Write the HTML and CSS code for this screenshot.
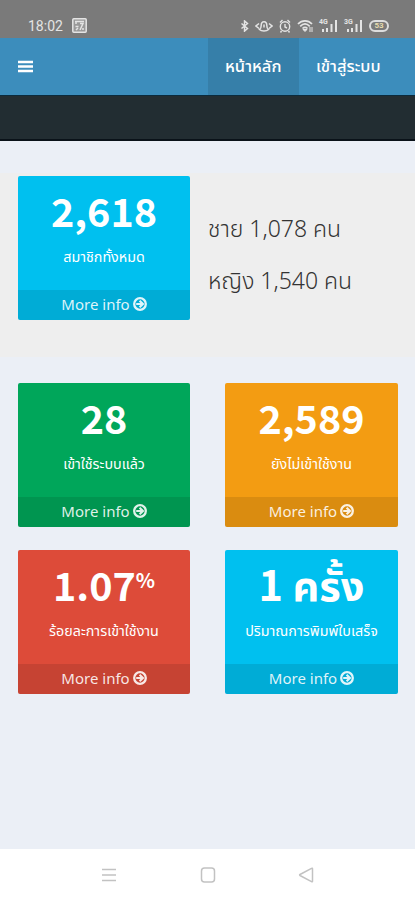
FILE: index.html
```
<!DOCTYPE html>
<html lang="th">
<head>
    <meta charset="UTF-8">
    <meta name="viewport" content="width=device-width, initial-scale=1">
    <title>หน้าหลัก</title>
    <link rel="stylesheet" href="styles.css">
</head>
<body>
    <svg class="defs" width="0" height="0">
        <symbol id="arrow" viewBox="0 0 14 14">
            <circle cx="7" cy="7" r="5.800" fill="none" stroke="currentColor" stroke-width="2.300"/>
            <path d="M3.200 7h6.400M6.600 3.700L9.900 7l-3.300 3.300" fill="none" stroke="currentColor" stroke-width="2.200"/>
        </symbol>
        <symbol id="signal" viewBox="0 0 19 14">
            <path d="M4 13v-3M8 13V9M12.500 13V5M17 13V1" stroke="currentColor" stroke-width="2"/>
        </symbol>
    </svg>

    <div class="status">
        <span class="time">18:02</span>
        <svg class="app-icon" width="15" height="15" viewBox="0 0 15 15">
            <rect x=".8" y=".8" width="13.400" height="13.400" rx="1" fill="#999" stroke="currentColor" stroke-width="1.500"/>
            <path d="M3 3.500h9M4 6V4M8 5.500h3L8 12M3.500 8.500h3M4 12l2-2M10 11h2" stroke="currentColor" stroke-width="1.500" fill="none"/>
        </svg>
        <div class="status-icons">
            <svg width="9" height="12" viewBox="0 0 9 14"><path d="M1 4l7 6-3.500 3V1L8 4 1 10" fill="none" stroke="currentColor" stroke-width="1.700"/></svg>
            <svg width="18" height="14" viewBox="0 0 18 14"><path d="M4 4.500L1 7l3 2.500M14 4.500L17 7l-3 2.500M4.500 10.500c2 2 7 2 9 0-1.300-.8-1.700-2-1.700-4C11.800 1.500 6.200 1.500 6.200 6.500c0 2-.4 3.200-1.700 4zM9 5.500v3" fill="none" stroke="currentColor" stroke-width="1.500"/></svg>
            <svg width="12" height="14" viewBox="0 0 12 14"><path d="M1 3.500L3.500 1M11 3.500L8.500 1M6 5v3l2 1M2.500 12l-1 1.500M9.500 12l1 1.500" fill="none" stroke="currentColor" stroke-width="1.400"/><circle cx="6" cy="7.500" r="4.700" fill="none" stroke="currentColor" stroke-width="1.400"/></svg>
            <svg width="16" height="14" viewBox="0 0 16 14"><path d="M1 5c4-4.300 10-4.300 14 0M3.200 7.300c3-3 6.600-3 9.600 0M5.500 9.500c1.600-1.500 3.400-1.500 5 0" fill="none" stroke="currentColor" stroke-width="1.700"/><path d="M8 12.500l-2-2h4zM13 8v5M15 8v5" fill="currentColor" stroke="currentColor"/></svg>
            <span class="network"><small>4G</small><svg width="19" height="14"><use href="#signal"/></svg></span>
            <span class="network"><small>3G</small><svg width="19" height="14"><use href="#signal"/></svg></span>
            <span class="battery">53</span>
        </div>
    </div>

    <div class="navbar">
        <svg class="toggle" width="15" height="14" viewBox="0 0 15 14"><path d="M0 2h15M0 6.500h15M0 11h15" stroke="currentColor" stroke-width="2.700"/></svg>
        <div class="menu">
            <a class="menu-item active">หน้าหลัก</a>
            <a class="menu-item">เข้าสู่ระบบ</a>
        </div>
    </div>
    <div class="sidebar-bar"></div>

    <div class="content">
        <div class="summary">
            <div class="box aqua">
                <h3>2,618</h3>
                <p>สมาชิกทั้งหมด</p>
                <a class="more">More info <svg width="14" height="14"><use href="#arrow"/></svg></a>
            </div>
            <div class="gender">
                <div class="male">ชาย 1,078 คน</div>
                <div class="female">หญิง 1,540 คน</div>
            </div>
        </div>

        <div class="boxes">
            <div class="box green">
                <h3>28</h3>
                <p>เข้าใช้ระบบแล้ว</p>
                <a class="more">More info <svg width="14" height="14"><use href="#arrow"/></svg></a>
            </div>
            <div class="box yellow">
                <h3>2,589</h3>
                <p>ยังไม่เข้าใช้งาน</p>
                <a class="more">More info <svg width="14" height="14"><use href="#arrow"/></svg></a>
            </div>
            <div class="box red">
                <h3>1.07<sup>%</sup></h3>
                <p>ร้อยละการเข้าใช้งาน</p>
                <a class="more">More info <svg width="14" height="14"><use href="#arrow"/></svg></a>
            </div>
            <div class="box aqua">
                <h3 class="times">1 ครั้ง</h3>
                <p>ปริมาณการพิมพ์ใบเสร็จ</p>
                <a class="more">More info <svg width="14" height="14"><use href="#arrow"/></svg></a>
            </div>
        </div>
    </div>

    <div class="phone-nav">
        <svg width="16" height="16" viewBox="0 0 16 16"><path d="M1 2.500h14M1 8h14M1 13.500h14"/></svg>
        <svg width="16" height="16" viewBox="0 0 16 16"><rect x="1.500" y="1" width="13" height="14" rx="3"/></svg>
        <svg width="16" height="16" viewBox="0 0 16 16"><path d="M14.500 1.800v12.400q0 1-1 .5L2 8.500q-.8-.5 0-1L13.500 1.300q1-.5 1 .5z"/></svg>
    </div>
</body>
</html>
```
FILE: styles.css
```
* {
    box-sizing: border-box;
}

body {
    margin: 0;
    height: 900px;
    display: flex;
    flex-direction: column;
    overflow: hidden;
    background: #ebeff6;
    font-family: "Noto Sans", "Noto Sans Thai", sans-serif;
    color: #333;
}

.defs {
    position: absolute;
}

.status {
    height: 38px;
    padding: 14px 26px 0 28px;
    display: flex;
    align-items: flex-start;
    background: #7a7a7a;
    color: #e4e4e4;
}

.time {
    width: 44px;
    font: 14px/24px Roboto, sans-serif;
}

.app-icon {
    margin-top: 4px;
}

.status-icons {
    margin-left: auto;
    display: flex;
    align-items: center;
    gap: 6px;
    height: 24px;
}

.network {
    position: relative;
    display: flex;
}

.network small {
    position: absolute;
    top: 0;
    left: 0;
    font: bold 7px/7px Roboto, sans-serif;
}

.battery {
    width: 20px;
    height: 12px;
    border: 2px solid #ddd;
    border-radius: 6px;
    font: bold 8px/8px Roboto, sans-serif;
    text-align: center;
    color: #e6dcae;
}

.navbar {
    height: 57px;
    padding-left: 18px;
    display: flex;
    align-items: center;
    background: #3c8dbc;
    color: #fff;
}

.menu {
    margin-left: auto;
    width: 207px;
    display: flex;
    align-self: stretch;
}

.menu-item {
    padding: 0 17px;
    display: flex;
    align-items: center;
    font-size: 16.5px;
    font-weight: 500;
    white-space: nowrap;
}

.menu-item.active {
    width: 91px;
    background: #367fa9;
}

.sidebar-bar {
    height: 46px;
    background: #222d32;
    border-top: 1px solid #0b2b3d;
    border-bottom: 2px solid #0a1219;
}

.content {
    flex: 1;
    padding-top: 32px;
}

.summary {
    height: 184px;
    padding: 3px 17px 0 18px;
    display: flex;
    align-items: flex-start;
    gap: 18px;
    background: #eee;
}

.gender {
    padding-top: 36px;
    font-size: 23px;
    font-weight: 300;
    line-height: 32px;
    white-space: nowrap;
}

.female {
    margin-top: 20px;
}

.boxes {
    padding: 27px 17px 0 18px;
    display: grid;
    grid-template-columns: 172px 173px;
    column-gap: 35px;
    row-gap: 23px;
}

.box {
    width: 172px;
    height: 144px;
    display: flex;
    flex-direction: column;
    align-items: center;
    border-radius: 2px;
    overflow: hidden;
    color: #fff;
}

.boxes .box {
    width: auto;
    margin-top: -1px;
    margin-bottom: 1px;
}

.aqua {
    background: #00c0ef;
}

.green {
    background: #00a65a;
}

.yellow {
    background: #f39c12;
}

.red {
    background: #dd4b39;
}

.box h3 {
    margin: 10px 0 0;
    height: 48px;
    font: bold 39.5px/48px "Noto Sans CJK JP", "Noto Sans Thai", sans-serif;
    white-space: nowrap;
}

.box .times {
    font-size: 41.5px;
    line-height: 46px;
}

.box sup {
    font-size: 20px;
    line-height: 0;
    position: relative;
    top: -13px;
    vertical-align: baseline;
}

.box p {
    margin: 13px 0 0;
    font-size: 14.3px;
    line-height: 20px;
    white-space: nowrap;
}

.more {
    margin-top: auto;
    width: 100%;
    height: 30px;
    display: flex;
    align-items: center;
    justify-content: center;
    gap: 3px;
    background: rgba(0, 0, 0, 0.1);
    color: rgba(255, 255, 255, 0.88);
    font: 15px/28px "Noto Sans", sans-serif;
    padding-bottom: 2px;
}

.phone-nav {
    height: 51px;
    padding: 0 101px;
    display: flex;
    align-items: center;
    justify-content: space-between;
    background: #fff;
}

.phone-nav svg {
    fill: none;
    stroke: #c2c2c2;
    stroke-width: 1.5;
}
```
